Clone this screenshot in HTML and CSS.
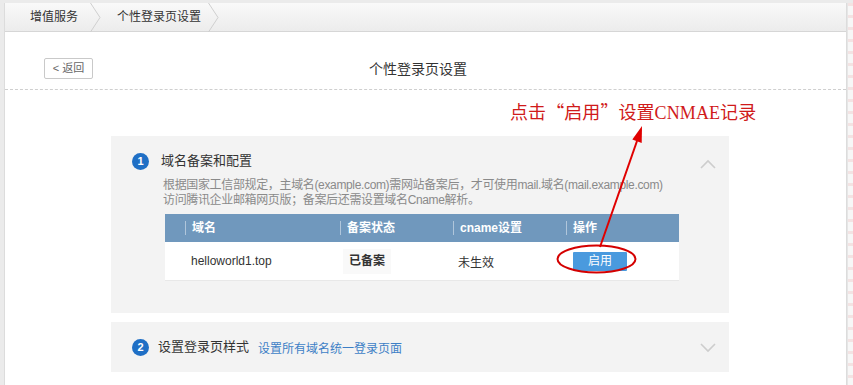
FILE: index.html
```html
<!DOCTYPE html>
<html lang="zh-CN">
<head>
<meta charset="utf-8">
<title>个性登录页设置</title>
<link rel="stylesheet" href="styles.css">
</head>
<body>
<div class="frame">
  <div class="crumbs">
    <span class="crumb crumb-first">增值服务</span>
    <svg class="sep" width="11" height="29" viewBox="0 0 11 29"><polyline points="0.5,0 10,14.5 0.5,29" fill="none" stroke="#cfcfcf" stroke-width="1"/></svg>
    <span class="crumb crumb-second">个性登录页设置</span>
    <svg class="sep" width="11" height="29" viewBox="0 0 11 29"><polyline points="0.5,0 10,14.5 0.5,29" fill="none" stroke="#cfcfcf" stroke-width="1"/></svg>
  </div>

  <div class="head">
    <button class="back">&lt; 返回</button>
    <h1 class="title">个性登录页设置</h1>
  </div>

  <div class="note">点击<span class="q">“</span>启用<span class="q">”</span>设置CNMAE记录</div>

  <div class="card card-one">
    <div class="card-head">
      <span class="num">1</span>
      <span class="card-title">域名备案和配置</span>
      <svg class="chev" width="16" height="10" viewBox="0 0 16 10"><polyline points="1,9 8,2 15,9" fill="none" stroke="#cdcdcd" stroke-width="1.6"/></svg>
    </div>
    <p class="desc">根据国家工信部规定，主域名(example.com)需网站备案后，才可使用mail.域名(mail.example.com)<br>访问腾讯企业邮箱网页版；备案后还需设置域名Cname解析。</p>
    <div class="table">
      <div class="thead">
        <div></div>
        <div><span class="th">域名</span></div>
        <div><span class="th">备案状态</span></div>
        <div><span class="th">cname设置</span></div>
        <div><span class="th">操作</span></div>
      </div>
      <div class="trow">
        <div></div>
        <div class="td td-domain">helloworld1.top</div>
        <div class="td"><span class="badge">已备案</span></div>
        <div class="td td-cname">未生效</div>
        <div class="td td-op"><span class="btn">启用</span></div>
      </div>
    </div>
  </div>

  <div class="card card-two">
    <span class="num">2</span>
    <span class="card-title title-two">设置登录页样式</span>
    <a class="link">设置所有域名统一登录页面</a>
    <svg class="chev" width="16" height="10" viewBox="0 0 16 10"><polyline points="1,1 8,8 15,1" fill="none" stroke="#cdcdcd" stroke-width="1.6"/></svg>
  </div>
</div>
<div class="edge"></div>

<svg class="annot" width="853" height="385" viewBox="0 0 853 385">
  <ellipse cx="596.5" cy="259" rx="39" ry="13.5" fill="none" stroke="#d40000" stroke-width="2"/>
  <line x1="600" y1="247" x2="637" y2="141" stroke="#e00000" stroke-width="2"/>
  <polygon points="642,126 632.3,139.5 641.7,142.9" fill="#e00000"/>
</svg>
</body>
</html>
```

FILE: styles.css
```css
html, body {
  margin: 0;
  padding: 0;
}
body {
  position: relative;
  width: 853px;
  height: 385px;
  overflow: hidden;
  background: #ebebeb;
  display: flex;
  align-items: stretch;
  padding-top: 3px;
  box-sizing: border-box;
  font-family: "Liberation Sans", "Noto Sans CJK SC", sans-serif;
  color: #333;
}
.frame {
  margin-left: 4px;
  width: 844px;
  box-sizing: border-box;
  background: #fff;
  border-left: 1px solid #dcdcdc;
  border-right: 1px solid #dcdcdc;
  display: flex;
  flex-direction: column;
}
.edge {
  width: 5px;
  background:
    repeating-linear-gradient(180deg, #f3e3e3 0 3px, #f7f7f7 3px 12px);
  border-left: 1px solid #e6e6e6;
}
.crumbs {
  height: 28px;
  border-bottom: 1px solid #d6d6d6;
  background: linear-gradient(180deg, #f9f9f9 0%, #ececec 100%);
  display: flex;
  align-items: center;
  font-size: 12px;
  color: #333;
}
.crumb {
  line-height: 28px;
}
.crumb-first {
  padding: 0 12px 0 25px;
}
.crumb-second {
  padding: 0 7px 0 16px;
}
.sep {
  display: block;
}
.head {
  display: flex;
  align-items: center;
  padding: 26px 0 10px 39px;
  border-bottom: 1px dashed #cfcfcf;
}
.back {
  width: 49px;
  height: 21px;
  padding: 0;
  margin: 0;
  box-sizing: border-box;
  border: 1px solid #c9c9c9;
  border-radius: 2px;
  background: #fff;
  font-family: "Liberation Sans", "Noto Sans CJK SC", sans-serif;
  font-size: 11px;
  color: #666;
  line-height: 19px;
}
.title {
  margin: 0 0 0 276px;
  font-size: 14px;
  font-weight: normal;
  color: #333;
  line-height: 20px;
}
.note {
  margin: 10px 0 0 505px;
  font-family: "Liberation Serif", "Noto Sans CJK SC", serif;
  font-size: 18px;
  line-height: 22px;
  color: #d01a1a;
  white-space: nowrap;
  letter-spacing: 0.1px;
}
.q {
  display: inline-block;
  width: 18px;
  text-align: center;
  font-family: "Noto Sans CJK SC", sans-serif;
}
.card {
  margin-left: 106px;
  width: 618px;
  background: #f3f3f3;
  box-sizing: border-box;
}
.card-one {
  margin-top: 12px;
  height: 177px;
  padding: 16px 13px 0 21px;
}
.card-head {
  display: flex;
  align-items: center;
  height: 18px;
}
.num {
  width: 17px;
  height: 17px;
  border-radius: 50%;
  background: #1f6fc5;
  color: #fff;
  font-size: 11px;
  font-weight: bold;
  line-height: 17px;
  text-align: center;
  flex: none;
}
.card-title {
  margin-left: 12px;
  font-size: 13px;
  color: #333;
  line-height: 18px;
}
.chev {
  margin-left: auto;
  display: block;
}
.card-one .chev {
  margin-top: 6px;
}
.desc {
  margin: 8px 0 0 31px;
  font-size: 12px;
  line-height: 15px;
  color: #8a8a8a;
  white-space: nowrap;
  letter-spacing: -0.35px;
}
.table {
  margin: 6px 0 0 33px;
  width: 514px;
}
.thead, .trow {
  display: grid;
  grid-template-columns: 20px 155px 113px 113px 113px;
}
.thead {
  height: 28px;
  background: #7098bd;
  align-items: center;
}
.th {
  display: block;
  border-left: 1px solid rgba(255, 255, 255, 0.45);
  padding-left: 6px;
  font-size: 12px;
  font-weight: bold;
  color: #fff;
  line-height: 14px;
}
.trow {
  height: 38px;
  background: #fff;
  align-items: center;
  border-bottom: 1px solid #e8e8e8;
}
.td {
  font-size: 12px;
  color: #333;
}
.td-domain {
  padding-left: 6px;
}
.badge {
  display: inline-block;
  margin-left: 3px;
  padding: 0 6px;
  line-height: 25px;
  background: #f9f9f9;
  font-weight: bold;
}
.td-cname {
  padding-left: 5px;
}
.td-op {
  padding-left: 7px;
}
.btn {
  display: inline-block;
  width: 54px;
  height: 19px;
  line-height: 19px;
  text-align: center;
  background: #4a9ade;
  color: #fff;
  font-size: 12px;
  border-radius: 1px;
}
.card-two {
  margin-top: 9px;
  height: 50px;
  padding: 0 13px 0 21px;
  display: flex;
  align-items: center;
}
.title-two {
  margin-left: 9px;
}
.link {
  margin-left: 9px;
  font-size: 12px;
  color: #3d7fc6;
  text-decoration: none;
}
.card-two .chev {
  margin-top: 2px;
}
.annot {
  position: absolute;
  left: 0;
  top: 0;
  pointer-events: none;
}
```
